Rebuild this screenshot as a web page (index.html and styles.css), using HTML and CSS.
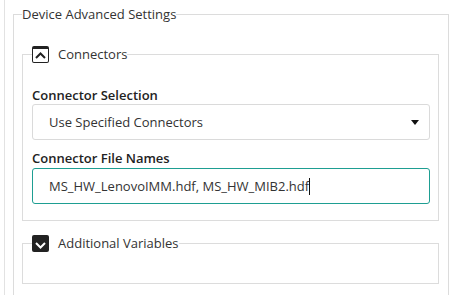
FILE: index.html
```html
<!DOCTYPE html>
<html lang="en">
<head>
  <meta charset="utf-8">
  <title>Device Advanced Settings</title>
  <link rel="stylesheet" href="styles.css">
</head>
<body>
  <div class="panel">
    <fieldset class="group">
      <legend class="group-title">Device Advanced Settings</legend>

      <fieldset class="section">
        <legend class="section-title">
          <span class="toggle toggle-open">
            <svg width="11" height="7" viewBox="0 0 11 7"><path d="M1 6 L5.5 1.5 L10 6" fill="none" stroke="#222" stroke-width="2"/></svg>
          </span>
          Connectors
        </legend>

        <div class="form-group">
          <label class="field-label">Connector Selection</label>
          <div class="select">Use Specified Connectors</div>
        </div>

        <div class="form-group">
          <label class="field-label">Connector File Names</label>
          <div class="field field-focus">MS_HW_LenovoIMM.hdf, MS_HW_MIB2.hdf<span class="caret"></span></div>
        </div>
      </fieldset>

      <fieldset class="section section-closed">
        <legend class="section-title">
          <span class="toggle toggle-closed">
            <svg width="11" height="7" viewBox="0 0 11 7"><path d="M1 1 L5.5 5.5 L10 1" fill="none" stroke="#fff" stroke-width="2"/></svg>
          </span>
          Additional Variables
        </legend>
      </fieldset>
    </fieldset>
  </div>
</body>
</html>
```

FILE: styles.css
```css
html, body {
  margin: 0;
  height: 100%;
  overflow: hidden;
}

body {
  font-family: 'Open Sans', sans-serif;
  font-size: 13px;
  color: #333;
  background: #fff;
}

.panel {
  margin-left: 4px;
  padding: 5px 6px 0 8px;
  border-left: 1px solid #e2e2e2;
  min-height: 100%;
}

.group {
  margin: 0;
  padding: 23px 9px 40px 8px;
  border: 1px solid #dcdcdc;
}

.group-title {
  padding: 0;
  line-height: 18px;
  color: #333;
}

.section {
  margin: 0;
  padding: 23px 8px 16px 9px;
  border: 1px solid #dcdcdc;
}

.section-closed {
  margin-top: 14px;
  padding-top: 0;
  padding-bottom: 31px;
}

.section-title {
  display: flex;
  align-items: center;
  gap: 9px;
  padding: 0;
  height: 17px;
  line-height: 17px;
}

.toggle {
  box-sizing: border-box;
  flex-shrink: 0;
  width: 17px;
  height: 17px;
  display: flex;
  align-items: center;
  justify-content: center;
  border-radius: 2px;
}

.toggle-open {
  border: 1px solid #222;
  border-top-width: 3px;
  padding-bottom: 1px;
}

.toggle-closed {
  background: #222;
  padding-top: 3px;
}

.form-group + .form-group {
  margin-top: 9px;
}

.field-label {
  display: block;
  font-weight: 600;
  line-height: 18px;
  color: #222;
}

.select,
.field {
  box-sizing: border-box;
  height: 36px;
  line-height: 34px;
  padding: 0 16px;
  border: 1px solid #dadada;
  border-radius: 3px;
  color: #333;
  position: relative;
}

.select::after {
  content: "";
  position: absolute;
  right: 10px;
  top: 15px;
  border-left: 4px solid transparent;
  border-right: 4px solid transparent;
  border-top: 5px solid #111;
}

.field {
  margin-top: 1px;
}

.field-focus {
  border-color: #1e9e92;
}

.caret {
  display: inline-block;
  width: 1px;
  height: 17px;
  background: #111;
  vertical-align: -4px;
}
```
